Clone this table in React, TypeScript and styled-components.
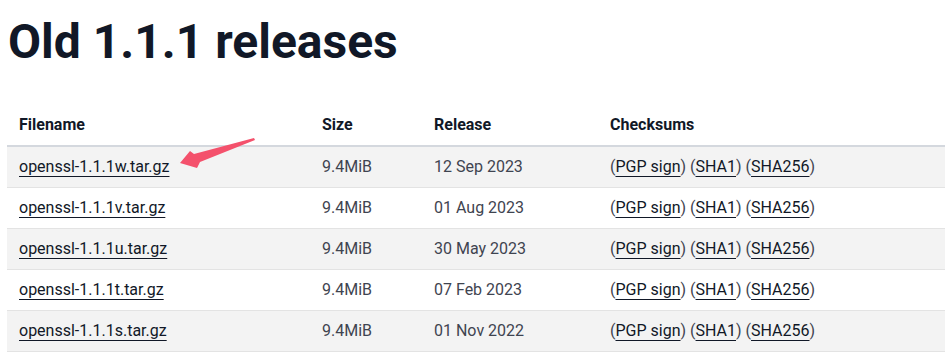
import React from "react";
import styled, { createGlobalStyle } from "styled-components";

const GlobalStyle = createGlobalStyle`
  body {
    margin: 0;
    background: #ffffff;
    font-family: Roboto, "Liberation Sans", sans-serif;
    color: #374151;
  }
`;

const Page = styled.div`
  position: relative;
  padding: 13px 5px 0 7px;
`;

const Title = styled.h1`
  margin: 0 0 34px 1px;
  font-size: 48px;
  line-height: 1.2;
  font-weight: 700;
  color: #111827;
`;

const Table = styled.table`
  width: 938px;
  border-collapse: collapse;
  table-layout: fixed;
  font-size: 16px;
`;

const HeadCell = styled.th`
  text-align: left;
  font-weight: 700;
  color: #111827;
  padding: 10px 12px 11px;
  border-bottom: 2px solid #d4d8de;
`;

const Row = styled.tr<{ $shade: boolean }>`
  background: ${({ $shade }) => ($shade ? "#f3f3f3" : "#ffffff")};
  border-bottom: 1px solid #e3e3e3;
`;

const Cell = styled.td`
  padding: 0 12px;
  height: 40px;
  color: #3f4450;
  white-space: nowrap;
`;

const FileLink = styled.a`
  color: #111827;
  text-decoration: underline;
  text-decoration-thickness: 1px;
  text-underline-offset: 4px;
`;

const Arrow = styled.svg`
  position: absolute;
  left: 175px;
  top: 134px;
`;

const releases = [
  { file: "openssl-1.1.1w.tar.gz", date: "12 Sep 2023" },
  { file: "openssl-1.1.1v.tar.gz", date: "01 Aug 2023" },
  { file: "openssl-1.1.1u.tar.gz", date: "30 May 2023" },
  { file: "openssl-1.1.1t.tar.gz", date: "07 Feb 2023" },
  { file: "openssl-1.1.1s.tar.gz", date: "01 Nov 2022" },
];

export default function App() {
  return (
    <Page>
      <GlobalStyle />
      <Title>Old 1.1.1 releases</Title>
      <Table>
        <colgroup>
          <col style={{ width: 303 }} />
          <col style={{ width: 112 }} />
          <col style={{ width: 176 }} />
          <col />
        </colgroup>
        <thead>
          <tr>
            <HeadCell>Filename</HeadCell>
            <HeadCell>Size</HeadCell>
            <HeadCell>Release</HeadCell>
            <HeadCell>Checksums</HeadCell>
          </tr>
        </thead>
        <tbody>
          {releases.map((r, i) => (
            <Row key={r.file} $shade={i % 2 === 0}>
              <Cell>
                <FileLink>{r.file}</FileLink>
              </Cell>
              <Cell>9.4MiB</Cell>
              <Cell>{r.date}</Cell>
              <Cell>
                (<FileLink>PGP sign</FileLink>) (<FileLink>SHA1</FileLink>) (
                <FileLink>SHA256</FileLink>)
              </Cell>
            </Row>
          ))}
        </tbody>
      </Table>
      {/* annotation pointing at the newest release */}
      <Arrow width="84" height="36" viewBox="0 0 84 36">
        <path
          d="M79 4 L80 6 L25 28 L22 34 L5 29 L15 17 L19 20 Z"
          fill="#f4516c"
        />
      </Arrow>
    </Page>
  );
}
